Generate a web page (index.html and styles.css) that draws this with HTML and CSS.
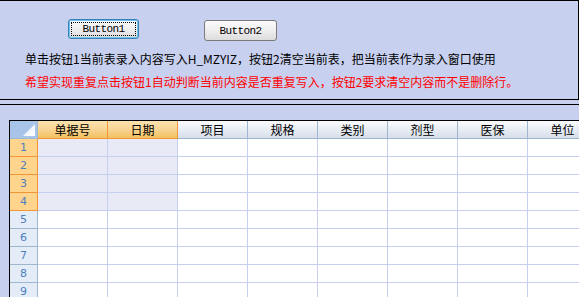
FILE: index.html
```html
<!DOCTYPE html>
<html lang="zh-CN">
<head>
    <meta charset="UTF-8">
    <meta name="viewport" content="width=device-width, initial-scale=1.0">
    <title>录入窗口</title>
    <link rel="stylesheet" href="styles.css">
</head>
<body>
    <div class="top-panel">
        <div class="buttons">
            <button type="button" class="btn btn-focus">Button1</button>
            <button type="button" class="btn btn-second">Button2</button>
        </div>
        <p class="note">单击按钮1当前表录入内容写入H_MZYIZ，按钮2清空当前表，把当前表作为录入窗口使用</p>
        <p class="note warn">希望实现重复点击按钮1自动判断当前内容是否重复写入，按钮2要求清空内容而不是删除行。</p>
    </div>
    <div class="divider"></div>

    <div class="sheet-area">
        <div class="sheet" id="sheet">
            <div class="cell corner">
                <svg width="12" height="12" viewBox="0 0 12 12"><defs><linearGradient id="tri" x1="0" y1="0" x2="1" y2="1"><stop offset="0" stop-color="#dfe8f5"/><stop offset="1" stop-color="#ffffff"/></linearGradient></defs><polygon points="12,0 12,12 0,12" fill="url(#tri)"/></svg>
            </div>
        </div>
    </div>

    <script>
        // build the sheet: column headers, row headers and empty cells
        const columns = ['单据号', '日期', '项目', '规格', '类别', '剂型', '医保', '单位'];
        const selectedCols = 2;
        const selectedRows = 4;
        const rowCount = 9;
        const sheet = document.getElementById('sheet');

        columns.forEach(function(name, i) {
            const head = document.createElement('div');
            head.className = 'cell col-head' + (i < selectedCols ? ' active' : '');
            head.textContent = name;
            sheet.appendChild(head);
        });

        for (let r = 1; r <= rowCount; r++) {
            const rowHead = document.createElement('div');
            rowHead.className = 'cell row-head' + (r <= selectedRows ? ' active' : '');
            rowHead.textContent = r;
            sheet.appendChild(rowHead);

            for (let c = 0; c < columns.length; c++) {
                const cell = document.createElement('div');
                cell.className = 'cell data';
                if (r <= selectedRows && c < selectedCols) {
                    cell.className += ' selected';
                }
                sheet.appendChild(cell);
            }
        }
    </script>
</body>
</html>
```

FILE: styles.css
```css
html, body {
    height: 100%;
}
body {
    margin: 0;
    overflow: hidden;
    background-color: #c8d0ef;
    font-family: "Noto Sans CJK SC", "DejaVu Sans", sans-serif;
    font-size: 12px;
}
.top-panel {
    height: 98px;
    border-top: 1px solid #000;
    border-bottom: 1px solid #000;
    border-right: 1px solid #000;
}
.buttons {
    display: flex;
    align-items: flex-start;
    gap: 65px;
    padding: 18px 0 0 68px;
}
.btn {
    height: 20px;
    padding: 0;
    font-family: "Liberation Mono", monospace;
    font-size: 11px;
    letter-spacing: -0.6px;
    color: #000;
    border: 1px solid #7b7b7b;
    border-radius: 3px;
    background: linear-gradient(#fbfbfb, #f0f0f0 45%, #dcdcdc);
}
.btn-focus {
    width: 71px;
    border-color: #3c7fb1;
    box-shadow: inset 0 0 0 1px #6cc6f0;
    outline: 1px dotted #000;
    outline-offset: -4px;
}
.btn-second {
    width: 73px;
    height: 21px;
    margin-top: 1px;
}
.note {
    margin: 10px 0 0 25px;
    line-height: 16px;
    color: #000;
}
.note.warn {
    margin-top: 7px;
    color: #ff0000;
}
.divider {
    height: 4px;
    border-bottom: 1px solid #000;
}
.sheet-area {
    padding: 15px 0 0 9px;
    overflow: hidden;
}
.sheet {
    display: grid;
    grid-template-columns: 28px repeat(8, 70px);
    grid-auto-rows: 18px;
    width: max-content;
    border-top: 1px solid #000;
    border-left: 1px solid #000;
    background: #fff;
}
.cell {
    box-sizing: border-box;
    display: flex;
    align-items: center;
    justify-content: center;
    border-right: 1px solid #c6d0ee;
    border-bottom: 1px solid #c6d0ee;
}
.corner {
    justify-content: flex-end;
    align-items: flex-end;
    padding: 0 2px 2px 0;
    background: #a9c4e9;
    border-color: #9eb6ce;
}
.corner svg {
    display: block;
}
.col-head {
    color: #000;
    background: linear-gradient(#fafbfd, #e8edf4 50%, #d7dfea);
    border-right-color: #9eb6ce;
    border-bottom-color: #9eb6ce;
}
.col-head.active {
    background: linear-gradient(#fbe2b1, #f8d493 50%, #f2c160);
    border-right-color: #f29536;
    border-bottom-color: #f29536;
}
.row-head {
    font-family: "DejaVu Sans", sans-serif;
    font-size: 11px;
    color: #4d7fbf;
    background: #e4ecf7;
    border-right-color: #9eb6ce;
    border-bottom-color: #9eb6ce;
}
.row-head.active {
    background: #ffd58d;
    border-right-color: #f29536;
    border-bottom-color: #f29536;
}
.data.selected {
    background: #e8eaf5;
}
```
